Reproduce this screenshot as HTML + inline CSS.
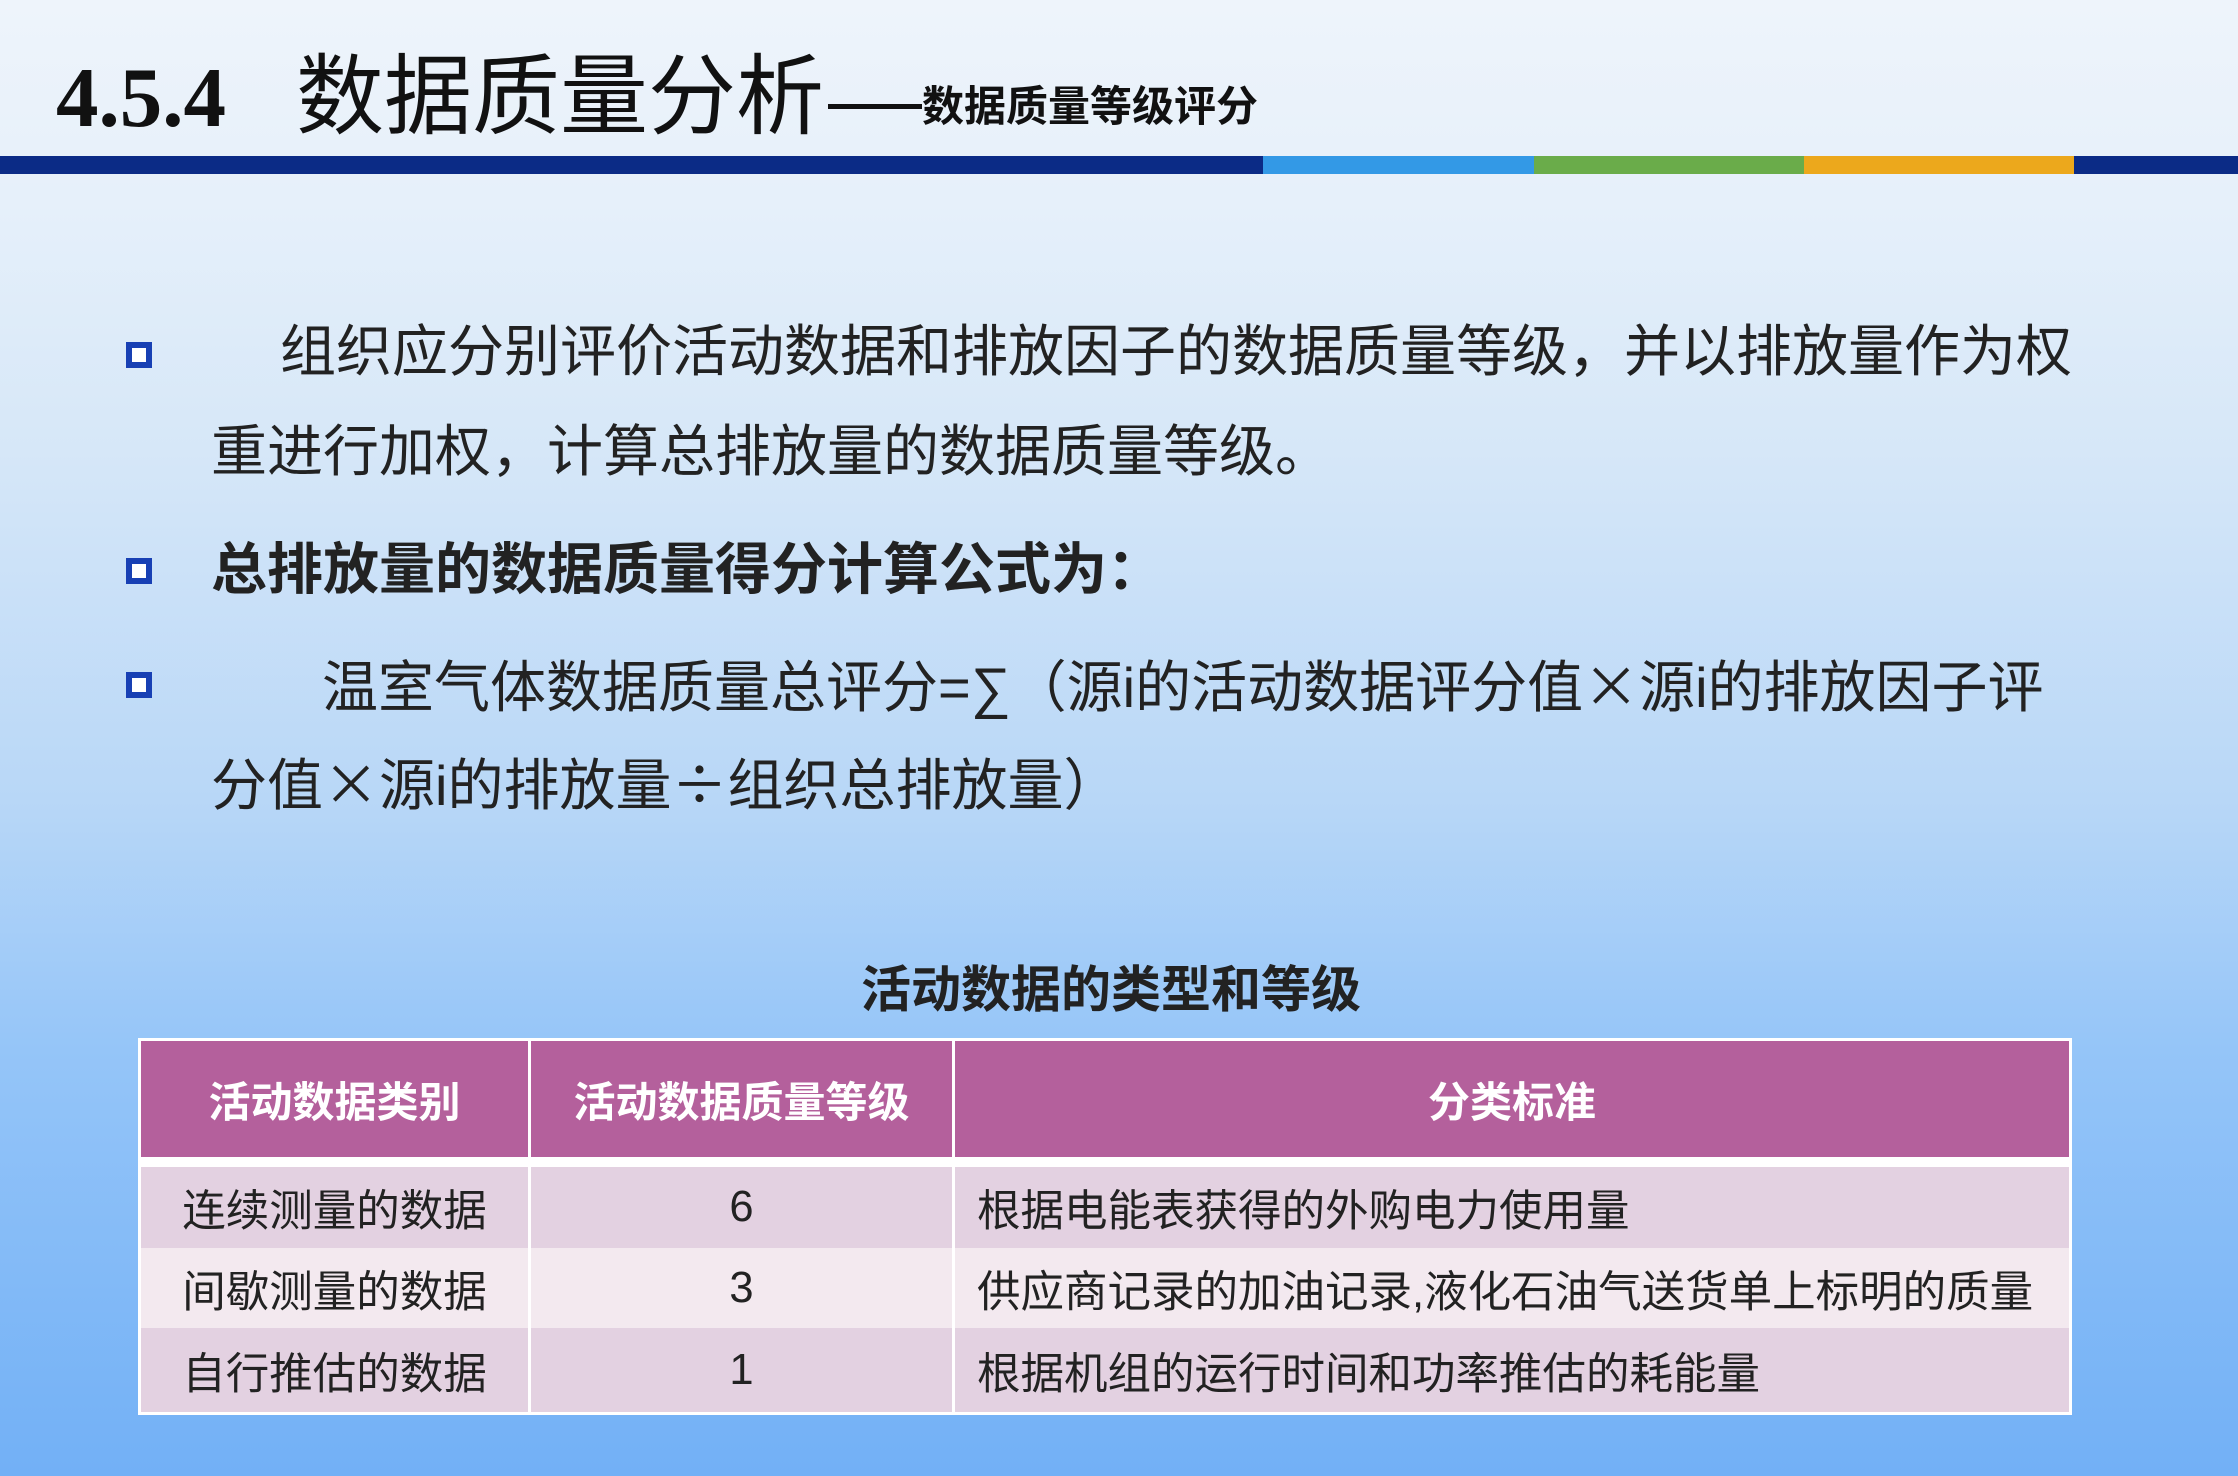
<!DOCTYPE html>
<html><head><meta charset="utf-8"><style>
*{margin:0;padding:0;box-sizing:border-box}
body{width:2238px;height:1476px;overflow:hidden;position:relative;font-family:"Liberation Sans","Noto Sans CJK SC",sans-serif;color:#222;
background:linear-gradient(180deg,#eef4fb 0px,#e6f0fa 200px,#d6e7f8 450px,#b8d7f7 800px,#95c5f8 1050px,#72b0f6 1476px);}
.a{position:absolute;white-space:nowrap}
.bar{position:absolute;top:156px;height:18px}
.bul{position:absolute;width:26px;height:26px;border:6px solid #1840b4;background:#fff;left:126px}
.t{font-size:56px;line-height:60px}
.c{font-family:"Noto Sans CJK SC",sans-serif}
.cell{position:absolute;display:flex;align-items:center;font-size:43.5px;white-space:nowrap}
.ctr{justify-content:center}
.h{background:#b4609c;color:#fff;font-weight:bold;font-size:42px}
.r1{background:#e3d1e1}.r2{background:#f3e9ef}
</style></head><body>
<div class="a" style="left:56px;top:48px;font-family:'Liberation Serif',serif;font-weight:bold;font-size:85px;line-height:100px;color:#111">4.5.4</div>
<div class="a" style="left:296px;top:42px;font-size:88px;line-height:110px;color:#111">数据质量分析</div>
<div class="a" style="left:828px;top:104px;width:94px;height:5px;background:#111"></div>
<div class="a" style="left:922px;top:82px;font-weight:bold;font-size:42px;line-height:50px;color:#111">数据质量等级评分</div>
<div class="bar" style="left:0;width:1263px;background:#0b2b86"></div>
<div class="bar" style="left:1263px;width:271px;background:#3399e6"></div>
<div class="bar" style="left:1534px;width:270px;background:#6aac4a"></div>
<div class="bar" style="left:1804px;width:270px;background:#eca81c"></div>
<div class="bar" style="left:2074px;width:164px;background:#0b2b86"></div>

<div class="bul" style="top:342px"></div>
<div class="a t" style="left:280px;top:322px">组织应分别评价活动数据和排放因子的数据质量等级，并以排放量作为权</div>
<div class="a t" style="left:211px;top:422px">重进行加权，计算总排放量的数据质量等级。</div>
<div class="bul" style="top:558px"></div>
<div class="a t" style="left:211px;top:540px;font-weight:bold">总排放量的数据质量得分计算公式为：</div>
<div class="bul" style="top:672px"></div>
<div class="a t" style="left:322px;top:654px">温室气体数据质量总评分=∑（源i的活动数据评分值<span class="c">×</span>源i的排放因子评</div>
<div class="a t" style="left:211px;top:752px">分值<span class="c">×</span>源i的排放量<span class="c">÷</span>组织总排放量）</div>

<div class="a" style="left:0;width:2222px;text-align:center;top:962px;font-size:50px;font-weight:bold;line-height:56px">活动数据的类型和等级</div>

<div class="a" style="left:138px;top:1038px;width:1934px;height:377px;background:#fff"></div>
<div class="cell ctr h" style="left:141px;top:1041px;width:387px;height:116px">活动数据类别</div>
<div class="cell ctr h" style="left:531px;top:1041px;width:421px;height:116px">活动数据质量等级</div>
<div class="cell ctr h" style="left:955px;top:1041px;width:1114px;height:116px">分类标准</div>

<div class="cell ctr r1" style="left:141px;top:1167px;width:387px;height:81px">连续测量的数据</div>
<div class="cell ctr r1" style="left:531px;top:1167px;width:421px;height:81px">6</div>
<div class="cell r1" style="left:955px;top:1167px;width:1114px;height:81px;padding-left:22px">根据电能表获得的外购电力使用量</div>

<div class="cell ctr r2" style="left:141px;top:1248px;width:387px;height:80px">间歇测量的数据</div>
<div class="cell ctr r2" style="left:531px;top:1248px;width:421px;height:80px">3</div>
<div class="cell r2" style="left:955px;top:1248px;width:1114px;height:80px;padding-left:22px">供应商记录的加油记录,液化石油气送货单上标明的质量</div>

<div class="cell ctr r1" style="left:141px;top:1328px;width:387px;height:84px">自行推估的数据</div>
<div class="cell ctr r1" style="left:531px;top:1328px;width:421px;height:84px">1</div>
<div class="cell r1" style="left:955px;top:1328px;width:1114px;height:84px;padding-left:22px">根据机组的运行时间和功率推估的耗能量</div>
</body></html>
